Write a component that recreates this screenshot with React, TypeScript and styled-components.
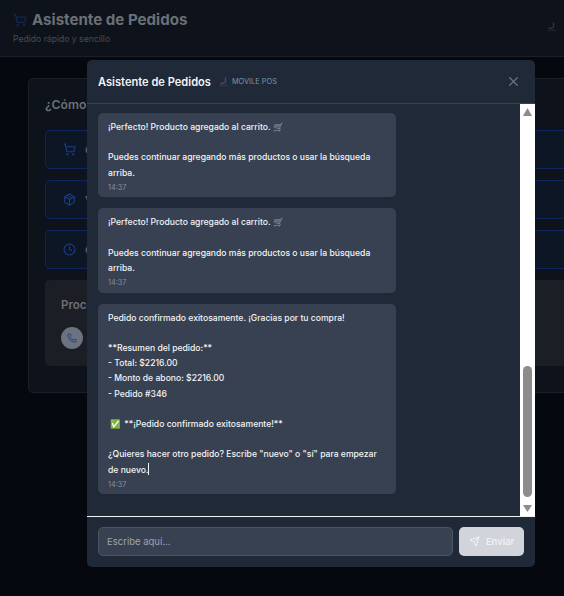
import React from "react";
import styled, { createGlobalStyle } from "styled-components";
import { ShoppingCart, Package, Clock, Phone, X, Send } from "lucide-react";

const Global = createGlobalStyle`
  html, body { margin: 0; padding: 0; height: 100%; overflow: hidden; background: #05080f; }
  #root { height: 100%; }
  * { box-sizing: border-box; }
`;

const Page = styled.div`
  position: relative;
  width: 564px;
  height: 596px;
  overflow: hidden;
  background: #05080f;
  font-family: Inter, "Noto Sans", sans-serif;
`;

const TopBar = styled.header`
  height: 57px;
  background: #0e131b;
  border-bottom: 1px solid #1c2026;
  padding: 10px 8px 0 13px;
  display: flex;
  justify-content: space-between;
`;

const TitleRow = styled.div`
  display: flex;
  align-items: center;
  gap: 5px;
  color: #6b6f76;
  font-size: 15.1px;
  font-weight: 700;
  line-height: 19px;
`;

const Subtitle = styled.div`
  margin-top: 4px;
  color: #474c54;
  font-size: 8.6px;
  line-height: 12px;
`;

const SkateSlot = styled.div`
  margin-top: 12px;
  display: flex;
`;

const Main = styled.main`
  padding: 21px 0 0 28px;
`;

const Panel = styled.section`
  width: 560px;
  height: 315px;
  background: #0e131b;
  border: 1px solid #1c2026;
  border-radius: 5px;
  padding: 17px 16px;
`;

const PanelTitle = styled.h2`
  margin: 0 0 16px;
  color: #6b6f76;
  font-size: 12.2px;
  font-weight: 600;
  line-height: 18px;
`;

const Option = styled.div`
  height: 39px;
  margin-bottom: 11px;
  background: #0d1624;
  border: 1px solid #0f2560;
  border-radius: 5px;
  display: flex;
  align-items: center;
  gap: 9px;
  padding-left: 17px;
  color: #1c3d86;
  font-size: 11px;
`;

const OptionText = styled.span`
  color: #5c6066;
  font-weight: 600;
`;

const ProcessCard = styled.div`
  margin-top: 10px;
  height: 86px;
  background: #1b1e24;
  border-radius: 5px;
  padding: 17px 16px;
`;

const ProcessTitle = styled.div`
  color: #6b6f76;
  font-size: 11.5px;
  font-weight: 600;
  line-height: 16px;
`;

const PhoneDot = styled.div`
  margin-top: 14px;
  width: 22px;
  height: 22px;
  border-radius: 50%;
  background: #6b7280;
  color: #1c3d86;
  display: flex;
  align-items: center;
  justify-content: center;
`;

const Modal = styled.div`
  position: absolute;
  left: 87px;
  top: 60px;
  width: 448px;
  height: 507px;
  background: #1f2937;
  border-radius: 5px;
  display: flex;
  flex-direction: column;
  overflow: hidden;
`;

const ModalHeader = styled.div`
  height: 44px;
  flex: none;
  border-bottom: 1px solid #374151;
  display: flex;
  align-items: center;
  padding: 0 14px 0 11px;
`;

const ModalTitle = styled.div`
  color: #f3f4f6;
  font-size: 11.1px;
  font-weight: 600;
`;

const Brand = styled.div`
  display: flex;
  align-items: center;
  gap: 4px;
  margin-left: 8px;
  color: #7d94b0;
  font-size: 7.4px;
`;

const CloseBtn = styled.div`
  margin-left: auto;
  color: #6b7280;
  display: flex;
`;

const Body = styled.div`
  flex: none;
  height: 413px;
  display: flex;
  border-bottom: 1px solid #f1f1f1;
`;

const Messages = styled.div`
  flex: 1;
  padding: 9px 0 0 11px;
  display: flex;
  flex-direction: column;
  gap: 11px;
  overflow: hidden;
`;

const Bubble = styled.div`
  width: 298px;
  background: #374151;
  border-radius: 5px;
  padding: 7px 10px 3.5px;
  color: #f3f4f6;
  font-size: 8.6px;
  font-weight: 500;
  line-height: 15.2px;
  white-space: pre-wrap;
`;

const Time = styled.div`
  color: #8a909b;
  font-size: 7.25px;
  font-weight: 400;
  line-height: 12px;
  margin-top: 1px;
`;

const Muted = styled.span`
  filter: saturate(0.35);
`;

const Check = styled.span`
  margin-left: 2px;
  margin-right: 1px;
`;

const Caret = styled.span`
  display: inline-block;
  width: 1px;
  height: 12px;
  background: #f3f4f6;
  vertical-align: -2px;
`;

const Track = styled.div`
  flex: none;
  width: 15px;
  background: #fff;
  display: flex;
  flex-direction: column;
  align-items: center;
  padding-top: 4px;
`;

const Thumb = styled.div`
  flex: none;
  width: 9px;
  height: 131px;
  margin: 250px 0 8px;
  border-radius: 5px;
  background: #8c8c8c;
`;

const Composer = styled.div`
  flex: 1;
  padding: 10px 11px;
  display: flex;
  gap: 6px;
  align-items: flex-start;
`;

const Input = styled.div`
  flex: 1;
  height: 29px;
  background: #374151;
  border: 1px solid #4b5563;
  border-radius: 5px;
  padding-left: 8px;
  display: flex;
  align-items: center;
  color: #9ca3af;
  font-size: 9.5px;
`;

const SendBtn = styled.div`
  width: 65px;
  height: 29px;
  background: #d1d5db;
  border-radius: 5px;
  color: #f3f4f6;
  font-size: 9.5px;
  font-weight: 500;
  display: flex;
  align-items: center;
  justify-content: center;
  gap: 6px;
`;

const ArrowUp = () => (
  <svg width="9" height="8" viewBox="0 0 9 8" style={{ flex: "none" }}><path d="M4.5 0L9 8H0z" fill="#8c8c8c" /></svg>
);
const ArrowDown = () => (
  <svg width="9" height="7" viewBox="0 0 9 7" style={{ flex: "none" }}><path d="M0 0H9L4.5 7z" fill="#8c8c8c" /></svg>
);

const Skate = ({ color }: { color: string }) => (
  <svg width="9" height="9" viewBox="0 0 9 9" fill="none" stroke={color} strokeWidth="1.3">
    <path d="M6.5 0.5V4.5C6.5 6 4.5 6.3 1.5 6.3" />
    <path d="M0.5 8.2H8.5" strokeWidth="0.7" />
  </svg>
);

const CartLine = () => (
  <>
    ¡Perfecto! Producto agregado al carrito. <Muted>🛒</Muted>
    {"\n\nPuedes continuar agregando más productos o usar la búsqueda arriba."}
  </>
);

export default function App() {
  return (
    <Page>
      <Global />
      <TopBar>
        <div>
          <TitleRow>
            <ShoppingCart size={14} color="#12275a" />
            Asistente de Pedidos
          </TitleRow>
          <Subtitle>Pedido rápido y sencillo</Subtitle>
        </div>
        <SkateSlot><Skate color="#33373d" /></SkateSlot>
      </TopBar>
      <Main>
        <Panel>
          <PanelTitle>¿Cómo puedo ayudarte?</PanelTitle>
          <Option><ShoppingCart size={13} /><OptionText>Crear pedido</OptionText></Option>
          <Option><Package size={13} /><OptionText>Ver productos</OptionText></Option>
          <Option><Clock size={13} /><OptionText>Consultar horario</OptionText></Option>
          <ProcessCard>
            <ProcessTitle>Proceso</ProcessTitle>
            <PhoneDot><Phone size={10} /></PhoneDot>
          </ProcessCard>
        </Panel>
      </Main>
      <Modal>
        <ModalHeader>
          <ModalTitle>Asistente de Pedidos</ModalTitle>
          <Brand><Skate color="#47505e" />MOVILE POS</Brand>
          <CloseBtn><X size={15} /></CloseBtn>
        </ModalHeader>
        <Body>
          <Messages>
            <Bubble><CartLine /><Time>14:37</Time></Bubble>
            <Bubble><CartLine /><Time>14:37</Time></Bubble>
            <Bubble>
              {"Pedido confirmado exitosamente. ¡Gracias por tu compra!\n\n**Resumen del pedido:**\n- Total: $2216.00\n- Monto de abono: $2216.00\n- Pedido #346\n\n"}
              <Check>✅</Check>
              {" **¡Pedido confirmado exitosamente!**\n\n¿Quieres hacer otro pedido? Escribe \"nuevo\" o \"sí\" para empezar de nuevo."}
              <Caret />
              <Time>14:37</Time>
            </Bubble>
          </Messages>
          <Track>
            <ArrowUp />
            <Thumb />
            <ArrowDown />
          </Track>
        </Body>
        <Composer>
          <Input>Escribe aquí...</Input>
          <SendBtn><Send size={11} />Enviar</SendBtn>
        </Composer>
      </Modal>
    </Page>
  );
}
